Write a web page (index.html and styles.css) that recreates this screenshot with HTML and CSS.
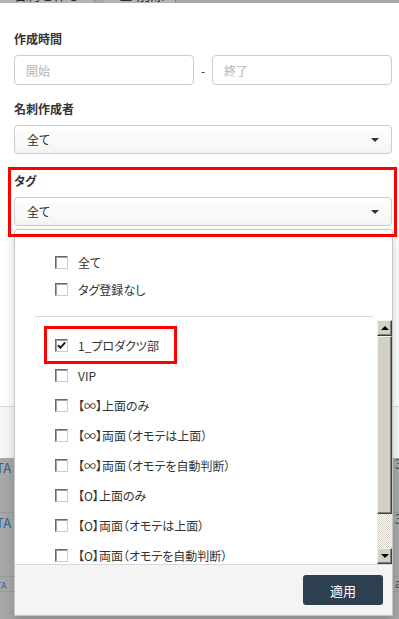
FILE: index.html
```html
<!DOCTYPE html>
<html lang="ja">
<head>
    <meta charset="UTF-8">
    <meta name="viewport" content="width=device-width, initial-scale=1.0">
    <title>名刺フィルター</title>
    <link rel="stylesheet" href="styles.css">
</head>
<body>
    <!-- page toolbar, mostly hidden behind the filter sheet -->
    <div class="topbar">
        <span class="tb-btn">名刺を作る</span>
        <span class="tb-btn tb-del">■ 削除</span>
    </div>

    <div class="sheet">
        <div class="filter">
            <div class="field">
                <div class="label">作成時間</div>
                <div class="range">
                    <input class="text-input" type="text" placeholder="開始">
                    <span class="dash">-</span>
                    <input class="text-input" type="text" placeholder="終了">
                </div>
            </div>

            <div class="field field-gap">
                <div class="label">名刺作成者</div>
                <div class="select"><span>全て</span><i class="caret"></i></div>
            </div>

            <div class="field field-tag">
                <div class="label">タグ</div>
                <div class="select"><span>全て</span><i class="caret"></i></div>

                <!-- Tag dropdown -->
                <div class="dropdown">
                    <ul class="opt-fixed">
                        <li><span class="cb"></span>全て</li>
                        <li><span class="cb"></span>タグ登録なし</li>
                    </ul>
                    <div class="divider"></div>
                    <div class="opt-scroll">
                        <ul class="opt-list">
                            <li class="checked"><span class="cb"><svg viewBox="0 0 11 11" width="11" height="11"><path d="M2 5.2 L4.4 7.8 L9.2 2.4" fill="none" stroke="#1e1e1e" stroke-width="2"/></svg></span>1_プロダクツ部</li>
                            <li><span class="cb"></span>VIP</li>
                            <li><span class="cb"></span>【∞】上面のみ</li>
                            <li><span class="cb"></span>【∞】両面（オモテは上面）</li>
                            <li><span class="cb"></span>【∞】両面（オモテを自動判断）</li>
                            <li><span class="cb"></span>【O】上面のみ</li>
                            <li><span class="cb"></span>【O】両面（オモテは上面）</li>
                            <li><span class="cb"></span>【O】両面（オモテを自動判断）</li>
                        </ul>
                        <div class="scrollbar">
                            <div class="sb-btn"><i class="sb-up"></i></div>
                            <div class="sb-thumb"></div>
                            <div class="sb-track"></div>
                            <div class="sb-btn"><i class="sb-down"></i></div>
                        </div>
                    </div>
                    <div class="dropdown-foot">
                        <button class="btn-apply">適用</button>
                    </div>
                </div>
            </div>
        </div>
        <div class="sheet-bottom"></div>
    </div>

    <!-- dimmed table rows behind -->
    <div class="backdrop">
        <div class="bd-row bd-tall"><span class="bd-l">TA</span><span class="bd-r">3</span></div>
        <div class="bd-row bd-tall2"><span class="bd-l">TA</span><span class="bd-r">3</span></div>
        <div class="bd-row bd-short"><span class="bd-l small">TA</span><span class="bd-r">a</span></div>
        <div class="bd-row bd-last"></div>
    </div>

    <!-- annotation frames -->
    <div class="mark mark-tag"></div>
    <div class="mark mark-item"></div>
</body>
</html>
```

FILE: styles.css
```css
html {
    overflow: hidden;
}

body {
    margin: 0;
    width: 399px;
    height: 619px;
    overflow: hidden;
    position: relative;
    background: #a8a8a8;
    font-family: "Noto Sans CJK JP", "Liberation Sans", sans-serif;
    font-size: 12px;
    color: #333;
    font-feature-settings: "palt";
}

ul {
    margin: 0;
    padding: 0;
    list-style: none;
}

/* toolbar strip */
.topbar {
    height: 3px;
    overflow: hidden;
    background: #a9a9a9;
    display: flex;
    white-space: nowrap;
}

.tb-btn {
    display: block;
    margin-top: -14px;
    padding: 0 12px;
    font-size: 14px;
    line-height: 17px;
    color: #2a2a2a;
    border-right: 1px solid #8a8a8a;
    background: #b4b4b4;
}

.tb-btn:first-child {
    width: 70px;
    box-shadow: 10px 0 0 -9px #8a8a8a;
    margin-right: 10px;
}

.tb-del {
    padding-left: 14px;
    width: 44px;
}

/* filter sheet */
.sheet {
    height: 455px;
    background: #fff;
    display: flex;
    flex-direction: column;
}

.filter {
    flex: 1;
    padding: 27px 7px 0 14px;
}

.sheet-bottom {
    height: 51px;
    border-top: 1px solid #dcdcdc;
    background: #f6f6f6;
}

.field {
    position: relative;
}

.field-gap {
    margin-top: 15px;
}

.field-tag {
    margin-top: 18px;
}

.label {
    font-size: 12px;
    font-weight: bold;
    line-height: 18px;
    margin-bottom: 7px;
    color: #333;
}

.range {
    display: grid;
    grid-template-columns: 1fr 18px 1fr;
    align-items: center;
}

.text-input {
    box-sizing: border-box;
    height: 30px;
    width: 100%;
    margin: 0;
    padding: 0 11px;
    border: 1px solid #cccccc;
    border-radius: 4px;
    font-family: inherit;
    font-size: 12px;
    color: #333;
    background: #fff;
}

.text-input::placeholder {
    color: #b4b4b4;
}

.dash {
    text-align: center;
    color: #333;
}

.select {
    box-sizing: border-box;
    height: 29px;
    padding: 0 11px 0 12px;
    border: 1px solid #cccccc;
    border-radius: 4px;
    background: linear-gradient(#ffffff, #f4f4f4);
    display: flex;
    align-items: center;
    justify-content: space-between;
    color: #333;
}

.caret {
    width: 0;
    height: 0;
    border-left: 4px solid transparent;
    border-right: 4px solid transparent;
    border-top: 4px solid #333;
    margin-right: 1px;
}

/* dropdown panel */
.dropdown {
    position: absolute;
    top: calc(100% + 3px);
    left: 0;
    right: -1px;
    z-index: 5;
    background: #fff;
    border: 1px solid #c6c6c6;
    border-radius: 3px 3px 0 0;
    box-shadow: 0 6px 12px rgba(0, 0, 0, 0.18);
    display: flex;
    flex-direction: column;
}

.opt-fixed {
    padding: 19px 0 0 40px;
}

.opt-fixed li {
    height: 27px;
    display: flex;
    align-items: center;
}

.divider {
    height: 1px;
    margin: 13px 19px 0 20px;
    background: #d6d6d6;
}

.opt-scroll {
    height: 247px;
    display: flex;
}

.opt-list {
    flex: 1;
    overflow: hidden;
    padding: 13px 0 0 40px;
}

.opt-list li {
    height: 30px;
    display: flex;
    align-items: center;
    white-space: nowrap;
}

.cb {
    box-sizing: border-box;
    width: 13px;
    height: 13px;
    margin-right: 10px;
    flex: none;
    border: 1px solid;
    border-color: #6a6a6a #d0cdc6 #d0cdc6 #6a6a6a;
    box-shadow: inset 1px 1px 0 #a0a0a0;
    background: #fff;
    display: flex;
    align-items: center;
    justify-content: center;
}

.cb svg {
    display: block;
}

/* classic scrollbar */
.scrollbar {
    width: 15px;
    margin-top: 3px;
    display: flex;
    flex-direction: column;
}

.sb-btn,
.sb-thumb {
    box-sizing: border-box;
    background: #d4d0c8;
    border: 1px solid;
    border-color: #f4f3ef #404040 #404040 #f4f3ef;
    box-shadow: inset -1px -1px 0 #808080;
}

.sb-btn {
    height: 16px;
    display: flex;
    align-items: center;
    justify-content: center;
}

.sb-thumb {
    height: 178px;
}

.sb-track {
    flex: 1;
    background: repeating-conic-gradient(#d4d0c8 0 25%, #ffffff 0 50%) 0 0 / 2px 2px;
}

.sb-up,
.sb-down {
    width: 0;
    height: 0;
    border-left: 4px solid transparent;
    border-right: 4px solid transparent;
}

.sb-up {
    border-bottom: 4px solid #000;
}

.sb-down {
    border-top: 4px solid #000;
}

.dropdown-foot {
    height: 50px;
    border-top: 1px solid #d8d8d8;
    background: #f4f4f4;
    display: flex;
    align-items: center;
    justify-content: flex-end;
    padding-right: 9px;
}

.btn-apply {
    width: 80px;
    height: 30px;
    border: none;
    border-radius: 3px;
    background: #2d3f51;
    color: #fff;
    font-family: inherit;
    font-size: 13px;
    cursor: pointer;
}

/* dimmed page behind */
.backdrop {
    background: #a8a8a8;
}

.bd-row {
    position: relative;
    border-bottom: 1px solid #999;
    color: #2e6196;
    font-size: 13px;
}

.bd-tall {
    height: 54px;
}

.bd-tall2 {
    height: 63px;
}

.bd-short {
    height: 14px;
}

.bd-last {
    height: 26px;
    border-bottom: none;
}

.bd-l {
    position: absolute;
    left: -4px;
    top: 3px;
    line-height: 14px;
}

.bd-l.small {
    font-size: 9px;
    top: 2px;
}

.bd-r {
    position: absolute;
    right: -3px;
    top: 0;
    line-height: 12px;
    color: #3a5570;
}

/* red annotation frames */
.mark {
    position: absolute;
    border: 3px solid #ff0000;
    z-index: 10;
}

.mark-tag {
    left: 8px;
    top: 167px;
    width: 383px;
    height: 64px;
}

.mark-item {
    left: 44px;
    top: 326px;
    width: 127px;
    height: 32px;
}
```
